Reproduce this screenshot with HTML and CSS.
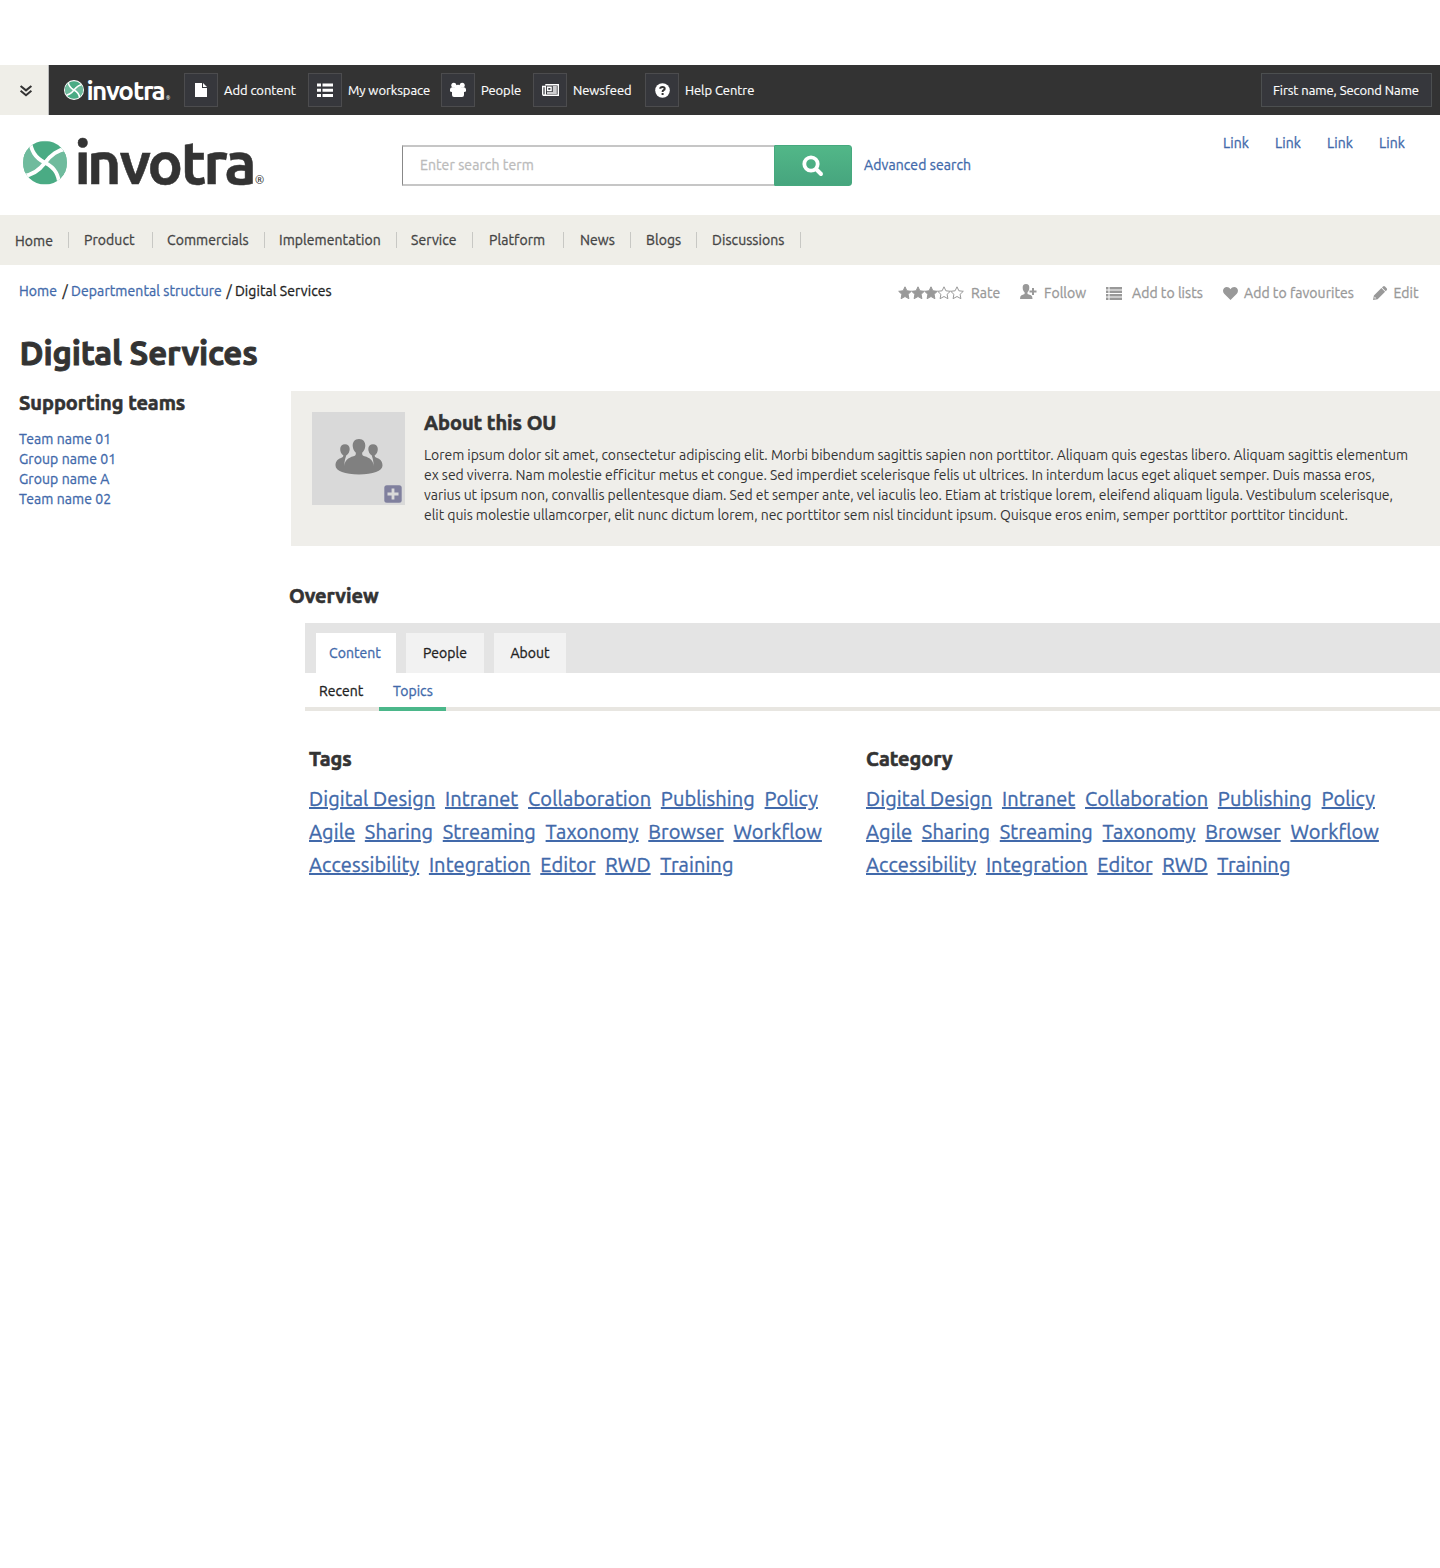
FILE: index.html
```
<!DOCTYPE html>
<html lang="en">
<head>
<meta charset="utf-8">
<title>Digital Services</title>
<link rel="stylesheet" href="styles.css">
</head>
<body>
<svg class="defs" width="0" height="0" aria-hidden="true">
  <symbol id="mark" viewBox="0 0 44 44">
    <clipPath id="disc"><circle cx="22" cy="22" r="22"/></clipPath>
    <g clip-path="url(#disc)">
      <rect width="44" height="44" fill="#4aab84"/>
      <path fill="#6fbb9d" d="M6-2C8 10 12 17 22 22 16 30 9 35-2 35.500V-2ZM46 7.500C34 9 28 14 22 22 32 27 36 34 37 46H46Z"/>
      <path fill="none" stroke-width="3.800" d="M6.500-2C8 10 12 17 22 22S36 34 36.500 46M-2 35.500C9 35 16 30 22 22S34 9 46 7.500"/>
    </g>
  </symbol>
  <symbol id="star" viewBox="0 0 14 14"><path d="M7 .8l1.900 4 4.400.5-3.200 3 .8 4.400L7 10.500l-3.900 2.200.8-4.400-3.200-3 4.400-.5z"/></symbol>
</svg>

<div class="topbar">
  <button class="toggle" aria-label="Toggle">
    <svg width="12" height="12" viewBox="0 0 12 12" fill="none" stroke="#333" stroke-width="2"><path d="M.6 1 6 5.400 11.400 1M.6 5.800 6 10.200l5.400-4.400"/></svg>
  </button>
  <svg class="brand brand-small" width="108" height="32" viewBox="0 0 108 32">
    <circle cx="10" cy="16" r="10" fill="#fff"/>
    <use href="#mark" x="1" y="7" width="18" height="18"/>
    <text class="wordmark" y="25.500" font-size="26" x="22.500 28 42 54.200 69 79 87.500">invotra</text>
    <text class="reg" x="102" y="25.500" font-size="5">®</text>
  </svg>
  <nav class="tools">
    <a><i><svg width="12" height="14" viewBox="0 0 12 14"><path fill="#fff" d="M0 0h7v5h5v9H0zM8 0l4 4H8z"/></svg></i><span>Add content</span></a>
    <a><i><svg width="16" height="14" viewBox="0 0 16 14"><path fill="#fff" d="M0 .5h4v3H0zM5.500.5H16v3H5.500zM0 5.700h4v3H0zM5.500 5.700H16v3H5.500zM0 11h4v3H0zM5.500 11H16v3H5.500z"/></svg></i><span>My workspace</span></a>
    <a><i><svg width="16" height="16" viewBox="0 0 16 16"><g fill="#fff"><circle cx="3.800" cy="3.200" r="2.500"/><circle cx="12.200" cy="3.200" r="2.500"/><circle cx="8" cy="6" r="3.200"/><path d="M0 7.500Q0 5.500 2 5.200h12q2 .3 2 2.300v1.500q0 1-2 1v3q0 2-2 2H4q-2 0-2-2v-3Q0 10 0 9z"/></g></svg></i><span>People</span></a>
    <a><i><svg width="17" height="13" viewBox="0 0 17 13"><path fill="none" stroke="#fff" stroke-width="1.400" d="M3.300.7h13v10.600H2Q.7 11.300.7 10V2.500h2.600V10q0 1.300-1.300 1.300M5.600 3.200h3.500v3.300H5.600zM10.800 3h4M10.800 5h4M10.800 7h4M5 9h9.800"/></svg></i><span>Newsfeed</span></a>
    <a><i><svg width="15" height="15" viewBox="0 0 15 15"><circle cx="7.500" cy="7.500" r="7.300" fill="#fff"/><path fill="none" stroke="#333" stroke-width="2" d="M5.200 5.800Q5.300 4 7.500 4t2.200 1.700Q9.700 6.700 8.600 7.200 7.600 7.700 7.600 9M7.600 10v1.900"/></svg></i><span>Help Centre</span></a>
  </nav>
  <a class="user"><span>First name, Second Name</span></a>
</div>

<header class="header">
  <svg class="brand brand-large" width="244" height="68" viewBox="0 -12 244 68">
    <use href="#mark" x="1" y="1.500" width="44" height="44.500"/>
    <text class="wordmark" y="45" font-size="59" x="52.500 65 97.500 125.500 159 181.500 202.500">invotra</text>
    <text class="reg" x="233" y="45" font-size="11">®</text>
  </svg>
  <form class="search">
    <input type="text" placeholder="Enter search term">
    <button type="button" aria-label="Search"><svg width="22" height="22" viewBox="0 0 22 22" fill="none" stroke="#fff"><circle cx="9" cy="9" r="6.700" stroke-width="3.800"/><path stroke-width="4" stroke-linecap="round" d="m14.500 14.500 4.500 4.500"/></svg></button>
  </form>
  <a class="advanced">Advanced search</a>
  <div class="links"><a>Link</a><a>Link</a><a>Link</a><a>Link</a></div>
</header>

<nav class="mainnav">
  <a class="home">Home</a><a>Product</a><a class="tight">Commercials</a><a class="tight">Implementation</a><a class="tight">Service</a><a class="wide">Platform</a><a class="wide">News</a><a>Blogs</a><a>Discussions</a>
</nav>

<div class="subhead">
  <div class="crumbs"><a>Home</a><b>/</b><a>Departmental structure</a><b>/</b><span>Digital Services</span></div>
  <div class="actions">
    <a><svg width="67" height="14" viewBox="0 0 67 14" fill="#999" stroke="#999"><use href="#star" width="14" height="14"/><use href="#star" x="13" width="14" height="14"/><use href="#star" x="26" width="14" height="14"/><g fill="none"><use href="#star" x="39" width="14" height="14"/><use href="#star" x="52" width="14" height="14"/></g></svg><span>Rate</span></a>
    <a class="follow"><svg width="17" height="16" viewBox="0 0 17 16" fill="#999"><path d="M6 0C8.400 0 9.500 1.500 9.300 4 9.200 6 8.500 7.500 7.500 8.200V10l3.500 1.300q1.500.7 1.500 3.700H0q0-3 1.500-3.700L4.600 10V8.200C3.500 7.500 2.800 6 2.700 4 2.500 1.500 3.600 0 6 0z"/><path d="M12 4h2v2.500h2.500v2H14V11h-2V8.500H9.500v-2H12z"/></svg><span>Follow</span></a>
    <a class="lists"><svg width="16" height="13" viewBox="0 0 16 13" fill="#999"><path d="M0 0h2.500v2.500H0zM3.500 0H16v2.500H3.500zM0 3.500h2.500V6H0zM3.500 3.500H16V6H3.500zM0 7h2.500v2.500H0zM3.500 7H16v2.500H3.500zM0 10.500h2.500V13H0zM3.500 10.500H16V13H3.500z"/></svg><span>Add to lists</span></a>
    <a><svg width="15" height="13" viewBox="0 0 15 13" fill="#999"><path d="M7.500 13 1.200 6.700C-.5 4.800-.2 2.300 1.200 1 3-.6 6-.3 7.500 2.200 9-.3 12-.6 13.800 1c1.400 1.300 1.700 3.800 0 5.700z"/></svg><span>Add to favourites</span></a>
    <a class="edit"><svg width="15" height="15" viewBox="0 0 15 15" fill="#999"><path d="M0 14 .9 9.600 8.400 2.100l3.700 3.700L4.600 13.200zM9 1.500l1-1q1-.9 2 0l1.700 1.700q.9 1 0 2l-1 1z"/><path fill="#fff" d="m1.700 10.800 1.500 1.500-1.400.3-.4-.4z"/></svg><span>Edit</span></a>
  </div>
</div>

<h1>Digital Services</h1>

<div class="columns">
  <aside>
    <h2>Supporting teams</h2>
    <ul><li><a>Team name 01</a></li><li><a>Group name 01</a></li><li><a>Group name A</a></li><li><a>Team name 02</a></li></ul>
  </aside>
  <main>
    <section class="about">
      <div class="avatar">
        <svg width="48" height="36" viewBox="0 0 48 36" fill="#808080"><path d="M24 0C28.500 0 30.500 3.300 30.300 7 30.100 10 29 12 27.300 13.500Q26.500 16.500 29.500 17.200C35 18.500 38.500 22 38.600 27 38.600 21.500 37.500 19 36.800 16.500 34.500 15 33.300 12.500 33.300 10 33.300 7 35.200 5.300 38 5.300S42.800 7.300 42.800 10C42.800 13 41.800 15 39.600 16.500Q39.500 18.200 42 19C46 20.300 47.500 23 47.500 26.500 47.500 32 38 35.500 24 35.500S.5 32 .5 26.500C.5 23 2 20.300 6 19Q8.500 18.200 8.400 16.500C6.200 15 5.200 13 5.200 10 5.200 7.300 7.200 5.300 10 5.300S14.700 7 14.700 10C14.700 12.500 13.500 15 11.200 16.500 10.500 19 9.400 21.500 9.400 27 9.500 22 13 18.500 18.500 17.200Q21.500 16.500 20.700 13.500C19 12 17.900 10 17.700 7 17.500 3.300 19.500 0 24 0Z"/></svg>
        <svg class="plus" width="18" height="18" viewBox="0 0 18 18"><rect x=".3" y=".3" width="17.400" height="17.400" rx="2.500" fill="#80809e"/><path stroke="#d9d9d9" stroke-width="2.800" d="M9 3.500v11M3.500 9h11"/></svg>
      </div>
      <div>
        <h2>About this OU</h2>
        <p><span>Lorem ipsum dolor sit amet, consectetur adipiscing elit. Morbi bibendum sagittis sapien non porttitor. Aliquam quis egestas libero. Aliquam sagittis elementum</span> <span>ex sed viverra. Nam molestie efficitur metus et congue. Sed imperdiet scelerisque felis ut ultrices. In interdum lacus eget aliquet semper. Duis massa eros,</span> <span>varius ut ipsum non, convallis pellentesque diam. Sed et semper ante, vel iaculis leo. Etiam at tristique lorem, eleifend aliquam ligula. Vestibulum scelerisque,</span> <span>elit quis molestie ullamcorper, elit nunc dictum lorem, nec porttitor sem nisl tincidunt ipsum. Quisque eros enim, semper porttitor porttitor tincidunt.</span></p>
      </div>
    </section>
    <h2 class="overview">Overview</h2>
    <div class="panel">
      <div class="tabs"><a class="active">Content</a><a>People</a><a>About</a></div>
      <div class="subtabs"><a>Recent</a><a class="active">Topics</a></div>
      <div class="clouds">
        <section>
          <h2>Tags</h2>
          <div class="cloud"><a>Digital Design</a><a>Intranet</a><a>Collaboration</a><a>Publishing</a><a>Policy</a></div>
          <div class="cloud"><a>Agile</a><a>Sharing</a><a>Streaming</a><a>Taxonomy</a><a>Browser</a><a>Workflow</a></div>
          <div class="cloud"><a>Accessibility</a><a>Integration</a><a>Editor</a><a>RWD</a><a>Training</a></div>
        </section>
        <section>
          <h2>Category</h2>
          <div class="cloud"><a>Digital Design</a><a>Intranet</a><a>Collaboration</a><a>Publishing</a><a>Policy</a></div>
          <div class="cloud"><a>Agile</a><a>Sharing</a><a>Streaming</a><a>Taxonomy</a><a>Browser</a><a>Workflow</a></div>
          <div class="cloud"><a>Accessibility</a><a>Integration</a><a>Editor</a><a>RWD</a><a>Training</a></div>
        </section>
      </div>
    </div>
  </main>
</div>
</body>
</html>
```
FILE: styles.css
```
* { box-sizing: border-box; }
body {
  margin: 0;
  padding-top: 65px;
  min-height: 1568px;
  background: #fff;
  color: #333;
  font: 14px/20px Ubuntu, "Noto Sans", sans-serif;
  letter-spacing: .05px;
  -webkit-text-stroke: .3px;
  overflow-x: hidden;
  white-space: nowrap;
}
a { color: #4169aa; text-decoration: none; }
h1, h2, p, ul { margin: 0; padding: 0; }
li { list-style: none; }
svg { display: block; flex: none; overflow: visible; -webkit-text-stroke: 0; letter-spacing: 0; }
.defs { position: absolute; }
h2 { font-size: 20px; line-height: 24px; font-weight: 700; letter-spacing: -.05px; -webkit-text-stroke: .6px; }

.topbar { display: flex; height: 50px; background: #333; align-items: center; letter-spacing: -.06px; -webkit-text-stroke: .15px; }
.toggle {
  width: 49px; height: 50px; padding: 2px 0 0 20px;
  border: 0; border-right: 1px solid #bbb; background: #efeee8;
}
.brand { stroke: #fff; }
.brand-small { margin: -1px 0 0 15px; }
.brand-small circle { stroke: none; }
.brand-small .wordmark { fill: #fff; stroke: none; }
.brand-small .reg { fill: #fff; stroke: none; }
.brand-large { margin-top: 12px; }
.brand-large .wordmark { fill: #333; stroke: #333; stroke-width: .5px; }
.brand-large .reg { fill: #333; stroke: none; }
.wordmark { font-family: Ubuntu, "Noto Sans", sans-serif; font-weight: 700; }
.reg { font-family: "Noto Sans", sans-serif; }
.tools { display: grid; grid-template-columns: 124px 133px 92px 112px 120px; margin-left: 12px; }
.tools a { display: flex; align-items: center; gap: 6px; color: #fff; font-size: 13px; }
.tools i {
  display: flex; align-items: center; justify-content: center;
  width: 34px; height: 34px; border: 1px solid #4c4c4e; background: #36373c;
}
.user {
  display: flex; align-items: center; justify-content: center;
  width: 171px; height: 34px; margin: 0 8px 0 auto; padding-right: 1px;
  border: 1px solid #4c4f50; background: #36373c; color: #fff; font-size: 13px;
}

.header { display: flex; height: 100px; padding-left: 22px; align-items: flex-start; }
.search { display: flex; margin: 30px 0 0 136px; }
.search input {
  width: 372px; height: 41px; padding: 0 17px 2px; outline: 0;
  border: 2px solid #c6c6c6; border-left: 1px solid #888; border-right: 0;
  font: inherit; letter-spacing: .1px; color: #333;
}
.search input::placeholder { color: #bbb; opacity: 1; }
.search button {
  width: 78px; height: 41px; padding: 0 0 0 27px; border: 1px solid #46a97e;
  border-radius: 0 3px 3px 0; background: linear-gradient(#52b788, #46a57e);
}
.advanced { margin: 40px 0 0 12px; letter-spacing: .1px; }
.links { display: grid; grid-template-columns: repeat(4, 52px); margin: 18px 9px 0 auto; letter-spacing: .1px; }

.mainnav {
  display: grid; grid-template-columns: 69px 84px 112px 132px 76px 91px 67px 66px 104px;
  height: 50px; align-items: center; background: #efeee8; letter-spacing: .07px;
}
.mainnav a { height: 16px; line-height: 16px; padding-left: 15px; border-right: 1px solid #c8c8c4; color: #444; }
.mainnav .home { line-height: 18px; }
.mainnav .tight { padding-left: 14px; }
.mainnav .wide { padding-left: 16px; }

.subhead { display: flex; justify-content: space-between; padding: 16px 0 0 19px; height: 68px; }
.crumbs { display: flex; letter-spacing: .08px; }
.crumbs b { font-weight: 400; width: 8.5px; margin-left: 5.5px; color: #222; }
.crumbs b:last-of-type { margin-left: 4.5px; }
.crumbs span { color: #222; }
.actions { display: grid; grid-template-columns: 122px 86px 117px 150px 67px; padding-top: 2px; }
.actions a { display: flex; align-items: center; height: 20px; color: #999; }
.actions svg { margin-right: 6px; }
.actions .follow svg { margin: -3px 7px 0 0; }
.actions .lists svg { margin-right: 10px; }
.actions .edit svg { margin-right: 5.5px; }

h1 { padding: 1px 0 0 19.5px; height: 58px; font-size: 33px; line-height: 38px; letter-spacing: -.15px; -webkit-text-stroke: .9px; }
.columns { display: grid; grid-template-columns: 291px 1149px; }
aside { padding-left: 19px; }
aside ul { margin-top: 14px; letter-spacing: .08px; }
.about { display: grid; grid-template-columns: 112px 1fr; height: 155px; padding: 21px 0 0 21px; background: #efeeea; }
.avatar { position: relative; width: 93px; height: 93px; padding: 27px 0 0 23px; background: #d9d9d9; }
.plus { position: absolute; right: 3px; bottom: 2px; }
.about h2 { margin-top: -1px; }
.about p { margin-top: 10px; letter-spacing: -.05px; -webkit-text-stroke: 0; }
.about p span { display: block; }
.overview { margin: 38px 0 0 -2px; }
.panel { margin: 15px 0 0 14px; }
.tabs { display: flex; gap: 10px; height: 50px; padding: 10px 0 0 11px; background: #e4e4e4; }
.tabs a { height: 40px; width: 78px; line-height: 40px; text-align: center; background: #f2f2f2; color: #222; }
.tabs .active { width: 80px; padding-right: 2px; background: #fff; color: #4169aa; }
.tabs a:last-child { width: 72px; }
.subtabs { display: grid; grid-template-columns: 74px 67px; height: 38px; border-bottom: 4px solid #e8e6e1; }
.subtabs a { height: 38px; padding: 8px 14px 0; color: #222; }
.subtabs .active { border-bottom: 4px solid #4bb78a; color: #4169aa; }
.clouds { display: grid; grid-template-columns: 557px 1fr; padding: 36px 0 0 4px; }
.clouds h2 { margin-bottom: 11px; }
.cloud { display: flex; gap: 9.7px; height: 33px; font-size: 20px; line-height: 33px; letter-spacing: .1px; -webkit-text-stroke: .35px; }
.cloud a { text-decoration: underline; }
```
